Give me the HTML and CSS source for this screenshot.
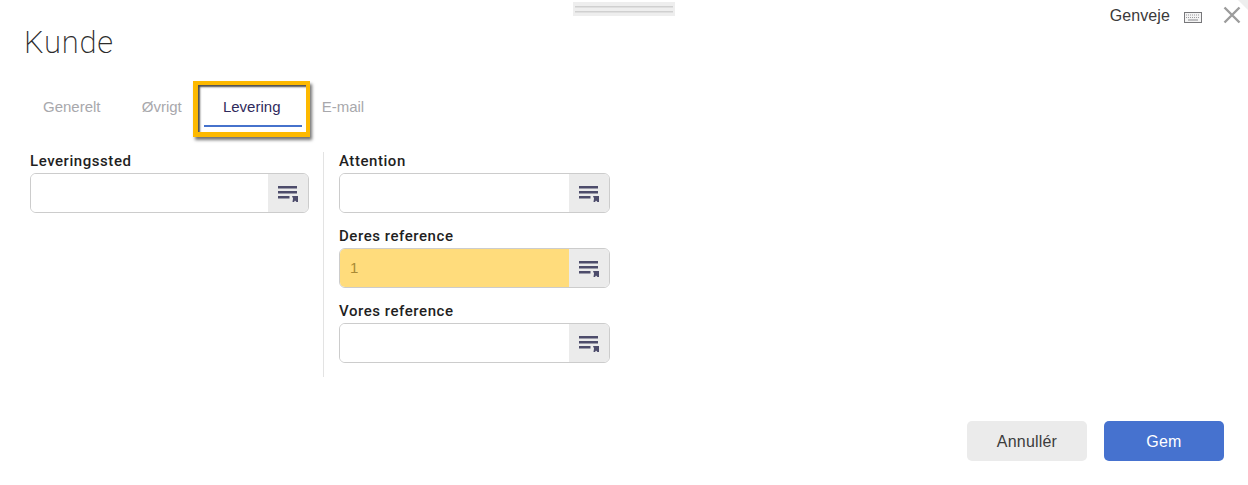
FILE: index.html
```html
<!DOCTYPE html>
<html lang="da">
<head>
<meta charset="utf-8">
<title>Kunde</title>
<link rel="stylesheet" href="styles.css">
</head>
<body>
<div class="dialog">
  <div class="handle"></div>
  <div class="corner"></div>
  <header class="header">
    <h1 class="title">Kunde</h1>
    <div class="tools">
      <span class="shortcut">Genveje</span>
      <svg class="kbd" width="18" height="11" viewBox="0 0 18 11">
        <rect x="0.5" y="0.5" width="17" height="10" fill="#f4f4f4" stroke="#77777a"/>
        <path d="M2 3h14M2 5.5h14" stroke="#9a9a9e" stroke-width="1" stroke-dasharray="1 1"/>
        <path d="M4 8h10" stroke="#8a8a8e" stroke-width="1"/>
      </svg>
      <svg class="close" width="18" height="18" viewBox="0 0 18 18">
        <path d="M1.500 1.500l15 15M16.500 1.500l-15 15" stroke="#9c9c9c" stroke-width="2.400" fill="none"/>
      </svg>
    </div>
  </header>
  <nav class="tabs">
    <a class="tab">Generelt</a>
    <a class="tab">Øvrigt</a>
    <a class="tab tab-active">Levering</a>
    <a class="tab">E-mail</a>
  </nav>
  <main class="form">
    <section class="col col-left">
      <div class="field">
        <label class="label">Leveringssted</label>
        <div class="control">
          <input class="input" type="text">
          <span class="addon"><svg width="20" height="17" viewBox="0 0 20 17"><path class="ic" d="M0 1h19v2.500H0zM0 6h19v2.500H0zM0 11h11.500v2.500H0z"/><path class="ic" d="M14 11h6v6h-1.500l-1.500-1.500-1 1.500h-1.500l.5-3.500z"/></svg></span>
        </div>
      </div>
    </section>
    <section class="col col-right">
      <div class="field">
        <label class="label">Attention</label>
        <div class="control">
          <input class="input" type="text">
          <span class="addon"><svg width="20" height="17" viewBox="0 0 20 17"><path class="ic" d="M0 1h19v2.500H0zM0 6h19v2.500H0zM0 11h11.500v2.500H0z"/><path class="ic" d="M14 11h6v6h-1.500l-1.500-1.500-1 1.500h-1.500l.5-3.500z"/></svg></span>
        </div>
      </div>
      <div class="field">
        <label class="label">Deres reference</label>
        <div class="control">
          <input class="input input-warn" type="text" value="1">
          <span class="addon"><svg width="20" height="17" viewBox="0 0 20 17"><path class="ic" d="M0 1h19v2.500H0zM0 6h19v2.500H0zM0 11h11.500v2.500H0z"/><path class="ic" d="M14 11h6v6h-1.500l-1.500-1.500-1 1.500h-1.500l.5-3.500z"/></svg></span>
        </div>
      </div>
      <div class="field">
        <label class="label">Vores reference</label>
        <div class="control">
          <input class="input" type="text">
          <span class="addon"><svg width="20" height="17" viewBox="0 0 20 17"><path class="ic" d="M0 1h19v2.500H0zM0 6h19v2.500H0zM0 11h11.500v2.500H0z"/><path class="ic" d="M14 11h6v6h-1.500l-1.500-1.500-1 1.500h-1.500l.5-3.500z"/></svg></span>
        </div>
      </div>
    </section>
  </main>
  <footer class="footer">
    <button class="btn btn-cancel">Annullér</button>
    <button class="btn btn-save">Gem</button>
  </footer>
</div>
</body>
</html>
```
FILE: styles.css
```css
*, *::before, *::after { box-sizing: border-box; }
html, body { margin: 0; padding: 0; background: #fff; }
body { width: 1248px; height: 485px; overflow: hidden; font-family: "Liberation Sans", Arial, sans-serif; }
.dialog { position: relative; height: 485px; display: flex; flex-direction: column; }
.handle {
  position: absolute; left: 573px; top: 2px; width: 102px; height: 14px;
  background: linear-gradient(#d0d0d0, #d0d0d0) 2px 4px / 98px 1.500px no-repeat,
              linear-gradient(#d0d0d0, #d0d0d0) 2px 9px / 98px 1.500px no-repeat,
              #eeeeee;
}
.corner {
  position: absolute; right: 0; top: 0; width: 0; height: 0;
  border-top: 10px solid #eeeeee; border-left: 10px solid transparent;
}
.header { display: flex; justify-content: space-between; align-items: flex-start; height: 85px; padding: 0 7px 0 24px; }
.title { margin: 25px 0 0; font: 200 31px/36px "Roboto", sans-serif; color: #2b2b2b; letter-spacing: .7px; }
.tools { display: flex; align-items: center; margin-top: 6px; }
.shortcut { font-size: 16px; line-height: 20px; letter-spacing: .1px; color: #3a3a3a; }
.kbd { margin-left: 14px; margin-top: 3px; }
.close { margin-left: 21px; margin-top: -3px; }
.tabs { display: flex; padding-left: 24px; height: 42px; }
.tab { padding: 13px 22.200px 0 19px; font-size: 15px; line-height: 18px; color: #a8a8ac; white-space: nowrap; }
.tab-active { position: relative; color: #2f2a5c; border-bottom: 2px solid #4672cc; padding-right: 21.500px; margin-right: .7px; }
.tab-active::after {
  content: ""; position: absolute; left: -11px; top: -4px; width: 117px; height: 56px;
  border-style: solid; border-color: #fdb900; border-width: 4px 4px 5px 5px;
  box-shadow: 2px 3px 3px rgba(0,0,0,.55), inset 2px 2px 2px rgba(0,0,0,.7);
}
.form { display: flex; margin-top: 25px; padding-left: 30px; height: 225px; }
.col { display: flex; flex-direction: column; gap: 14px; }
.col-left { width: 279px; }
.col-right { width: 287px; margin-left: 14px; padding-left: 15px; border-left: 1px solid #e3e3e3; }
.field { display: flex; flex-direction: column; }
.label { height: 21px; font: 500 15px/18px "Roboto", sans-serif; color: #1f1f1f; letter-spacing: .55px; }
.control { display: flex; height: 40px; border: 1px solid #cccccc; border-radius: 6px; overflow: hidden; }
.input { flex: 1; min-width: 0; border: 0; outline: 0; padding: 0 10px 2px; background: #fff; font: 15px "Liberation Sans", sans-serif; color: #333; }
.input-warn { background: #ffdc7c; color: #a98a35; }
.addon { flex: none; width: 40px; display: flex; align-items: center; justify-content: center; background: #ebebeb; }
.ic { fill: #4d4c6b; }
.footer { display: flex; justify-content: flex-end; gap: 17px; padding-right: 24px; margin-top: 44px; }
.btn { width: 120px; height: 40px; border: 0; border-radius: 5px; padding: 1px 0 0; font: 16px "Liberation Sans", sans-serif; letter-spacing: .2px; }
.btn-cancel { background: #ebebeb; color: #3c3c3c; }
.btn-save { background: #4672cf; color: #fff; }
```
